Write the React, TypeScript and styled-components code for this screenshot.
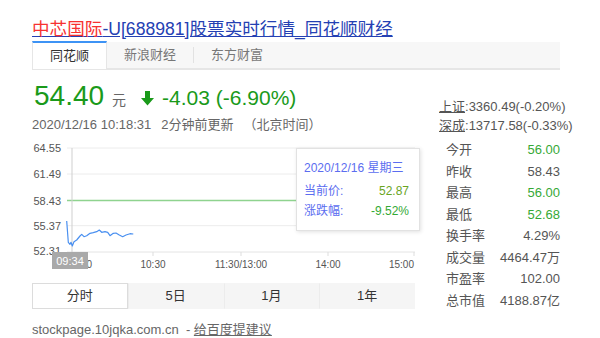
import React from "react";
import styled, { createGlobalStyle } from "styled-components";

const GlobalStyle = createGlobalStyle`
  body {
    margin: 0;
    background: #fff;
    font-family: "Liberation Sans", "Noto Sans CJK SC", sans-serif;
  }
`;

const GREEN = "#1a9a1a";
const STAT_GREEN = "#36a936";

const stats = [
  { label: "今开", value: "56.00", green: true },
  { label: "昨收", value: "58.43", green: false },
  { label: "最高", value: "56.00", green: true },
  { label: "最低", value: "52.68", green: true },
  { label: "换手率", value: "4.29%", green: false },
  { label: "成交量", value: "4464.47万", green: false },
  { label: "市盈率", value: "102.00", green: false },
  { label: "总市值", value: "4188.87亿", green: false },
];

const periods = ["分时", "5日", "1月", "1年"];

const priceLine: [number, number][] = [
  [34.7, 81], [36.3, 102.3], [38, 104.3], [39, 102.3], [40.3, 106],
  [42, 101.7], [44.7, 100], [48, 96], [49.7, 94.3], [52, 96.7],
  [54.7, 95.7], [58, 93.3], [61.3, 92.7], [64.7, 91.7], [67.3, 90],
  [69.7, 92.3], [73, 91.7], [75.7, 92.3], [78, 95.7], [81.3, 93.3],
  [84, 93], [87.3, 95], [90.7, 96.7], [94, 95], [98, 93.7], [101.3, 94],
];

const yTicks = [
  { label: "64.55", y: 8 },
  { label: "61.49", y: 34 },
  { label: "58.43", y: 60.5 },
  { label: "55.37", y: 85.7 },
  { label: "52.31", y: 111 },
];

const App = () => {
  return (
    <Page>
      <GlobalStyle />
      <Title>
        <em>中芯国际</em>-U[688981]股票实时行情_同花顺财经
      </Title>
      <SourceTabs>
        <SourceTab active>同花顺</SourceTab>
        <SourceTab>新浪财经</SourceTab>
        <Divider />
        <SourceTab>东方财富</SourceTab>
      </SourceTabs>

      <Body>
        <Main>
          <PriceRow>
            <Price>54.40</Price>
            <Unit>元</Unit>
            <Arrow viewBox="0 0 13 15">
              <polygon points="4,0 9,0 9,7 13,7 6.5,14.5 0,7 4,7" fill={GREEN} />
            </Arrow>
            <Change>-4.03 (-6.90%)</Change>
          </PriceRow>
          <UpdateRow>
            2020/12/16 10:18:31<Gap />2分钟前更新<Gap />（北京时间）
          </UpdateRow>

          <ChartBox>
            <svg width="388" height="132" viewBox="0 0 388 132">
              {[8, 34, 85.7].map((y) => (
                <line key={y} x1="35" x2="383" y1={y} y2={y} stroke="#ececec" />
              ))}
              <line x1="35" x2="383" y1="112" y2="112" stroke="#e4e4e4" />
              <line x1="35" x2="383" y1="60.5" y2="60.5" stroke="#8fd38f" strokeWidth="1.5" />
              {[121, 209, 296, 382].map((x) => (
                <line key={x} x1={x} x2={x} y1="112" y2="116" stroke="#ddd" />
              ))}
              {yTicks.map((t) => (
                <text key={t.label} x="29" y={t.y + 4} textAnchor="end" fontSize="11" fill="#555">
                  {t.label}
                </text>
              ))}
              <g fontSize="10" fill="#555">
                <text x="35" y="127.5">09:30</text>
                <text x="121" y="127.5" textAnchor="middle">10:30</text>
                <text x="209" y="127.5" textAnchor="middle">11:30/13:00</text>
                <text x="296" y="127.5" textAnchor="middle">14:00</text>
                <text x="382" y="127.5" textAnchor="end">15:00</text>
              </g>
              <line x1="40" x2="40" y1="8" y2="112" stroke="#cfcfcf" />
              <polyline
                points={priceLine.map((p) => p.join(",")).join(" ")}
                fill="none"
                stroke="#4a90f0"
                strokeWidth="1.2"
                strokeLinejoin="round"
              />
              {/* crosshair time label sits over the first axis label */}
              <rect x="20" y="112" width="36" height="17" fill="#a9a9a9" />
              <text x="38" y="124.5" textAnchor="middle" fontSize="11" fill="#fff">
                09:34
              </text>
            </svg>
            <Tooltip>
              <TipDate>2020/12/16 星期三</TipDate>
              <TipRow>
                <span>当前价:</span>
                <TipValue color="#6aa51f">52.87</TipValue>
              </TipRow>
              <TipRow>
                <span>涨跌幅:</span>
                <TipValue color="#34a934">-9.52%</TipValue>
              </TipRow>
            </Tooltip>
          </ChartBox>

          <PeriodTabs>
            {periods.map((p, i) => (
              <PeriodTab key={p} active={i === 0}>
                {p}
              </PeriodTab>
            ))}
          </PeriodTabs>

          <Footer>
            stockpage.10jqka.com.cn&nbsp;&nbsp;- <u>给百度提建议</u>
          </Footer>
        </Main>

        <Side>
          <IndexLine>
            <u>上证</u>:3360.49(-0.20%)
          </IndexLine>
          <IndexLine>
            <u>深成</u>:13717.58(-0.33%)
          </IndexLine>
          <StatTable>
            {stats.map((s) => (
              <StatRow key={s.label}>
                <span>{s.label}</span>
                <StatValue green={s.green}>{s.value}</StatValue>
              </StatRow>
            ))}
          </StatTable>
        </Side>
      </Body>
    </Page>
  );
};

export default App;

const Page = styled.div`
  width: 528px;
  margin-left: 32px;
  padding-top: 18px;
`;

const Title = styled.div`
  font-size: 17.6px;
  line-height: 22px;
  color: #2440b3;
  text-decoration: underline;
  white-space: nowrap;

  em {
    font-style: normal;
    color: #f73131;
  }
`;

const SourceTabs = styled.div`
  display: flex;
  align-items: center;
  height: 26px;
  margin-top: 2px;
  background: #f7f7f7;
  border-bottom: 2px solid #e6e6e6;
`;

const SourceTab = styled.div<{ active?: boolean }>`
  box-sizing: border-box;
  height: ${({ active }) => (active ? "28px" : "26px")};
  align-self: flex-start;
  padding: 0 17px;
  font-size: 13px;
  line-height: ${({ active }) => (active ? "25px" : "26px")};
  color: ${({ active }) => (active ? "#333" : "#777")};
  background: ${({ active }) => (active ? "#fff" : "transparent")};
  border-top: ${({ active }) => (active ? "2px solid #3d93f5" : "none")};
  border-left: ${({ active }) => (active ? "1px solid #e6e6e6" : "none")};
  border-right: ${({ active }) => (active ? "1px solid #e6e6e6" : "none")};
  margin-top: ${({ active }) => (active ? "-1px" : "0")};
  position: relative;
  z-index: 1;
`;

const Divider = styled.div`
  width: 1px;
  height: 16px;
  background: #e2e2e2;
`;

const Body = styled.div`
  display: flex;
  gap: 19px;
`;

const Main = styled.div`
  width: 388px;
`;

const PriceRow = styled.div`
  margin-top: 8px;
  height: 36px;
  line-height: 36px;
  white-space: nowrap;
  color: ${GREEN};
`;

const Price = styled.span`
  font-size: 28px;
  margin-left: 2px;
`;

const Unit = styled.span`
  font-size: 14px;
  color: #666;
  margin-left: 8px;
`;

const Arrow = styled.svg`
  width: 13px;
  height: 15px;
  margin-left: 15px;
  vertical-align: -1px;
`;

const Change = styled.span`
  font-size: 21px;
  margin-left: 8px;
`;

const UpdateRow = styled.div`
  margin-top: 2px;
  font-size: 13px;
  line-height: 18px;
  color: #666;
  white-space: nowrap;
`;

const Gap = styled.span`
  display: inline-block;
  width: 10px;
`;

const ChartBox = styled.div`
  position: relative;
  margin-top: 6px;
  height: 132px;

  svg {
    display: block;
    font-family: "Liberation Sans", sans-serif;
  }
`;

const Tooltip = styled.div`
  position: absolute;
  left: 264px;
  top: 8px;
  width: 124px;
  box-sizing: border-box;
  padding: 9px 10px 9px 7px;
  background: #fff;
  border: 1px solid #e2e2e2;
  box-shadow: 1px 1px 4px rgba(0, 0, 0, 0.12);
  font-size: 12px;
  color: #5b6df0;
`;

const TipDate = styled.div`
  line-height: 20px;
  margin-bottom: 3px;
`;

const TipRow = styled.div`
  display: flex;
  justify-content: space-between;
  line-height: 20px;
`;

const TipValue = styled.span<{ color: string }>`
  color: ${({ color }) => color};
`;

const PeriodTabs = styled.div`
  display: grid;
  grid-template-columns: repeat(4, 1fr);
  width: 383px;
  height: 26px;
  margin-top: 11px;
  background: #f5f5f5;
`;

const PeriodTab = styled.div<{ active?: boolean }>`
  box-sizing: border-box;
  text-align: center;
  font-size: 13px;
  line-height: 24px;
  color: #333;
  background: ${({ active }) => (active ? "#fff" : "transparent")};
  border: 1px solid ${({ active }) => (active ? "#dcdcdc" : "transparent")};
  & + & {
    border-left-color: ${({ active }) => (active ? "#dcdcdc" : "#ececec")};
  }
`;

const Footer = styled.div`
  margin-top: 12px;
  font-size: 13px;
  line-height: 18px;
  color: #666;
  white-space: nowrap;
`;

const Side = styled.div`
  width: 121px;
  padding-top: 27px;
`;

const IndexLine = styled.div`
  text-align: right;
  font-size: 13px;
  line-height: 19px;
  color: #555;
  white-space: nowrap;
`;

const StatTable = styled.div`
  margin-top: 4px;
  padding-left: 7px;
`;

const StatRow = styled.div`
  display: flex;
  justify-content: space-between;
  font-size: 13px;
  line-height: 21.5px;
  color: #555;
`;

const StatValue = styled.span<{ green?: boolean }>`
  color: ${({ green }) => (green ? STAT_GREEN : "#555")};
`;
